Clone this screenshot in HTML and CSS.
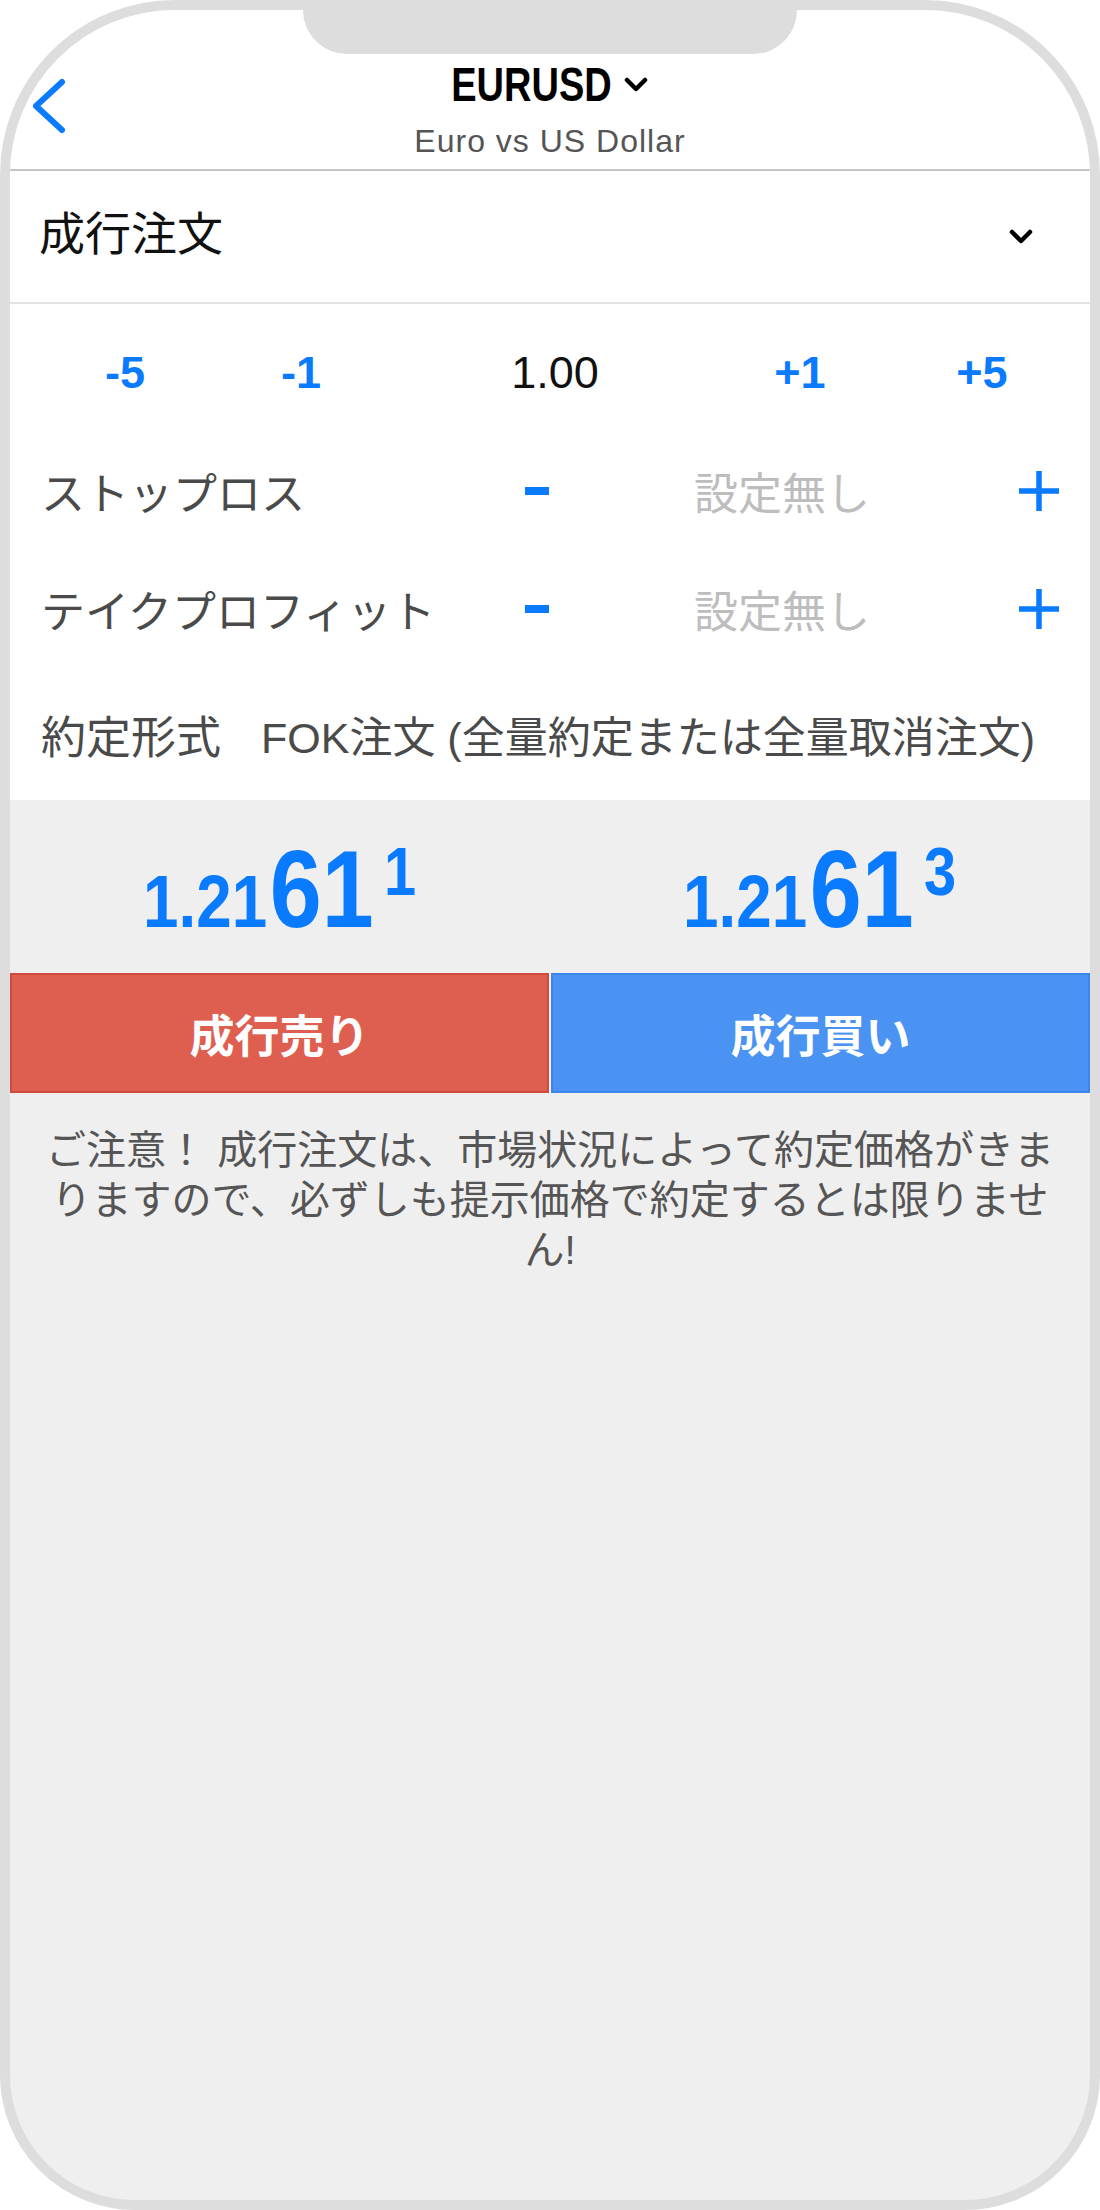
FILE: index.html
```html
<!DOCTYPE html>
<html lang="ja">
<head>
    <meta charset="UTF-8">
    <meta name="viewport" content="width=device-width, initial-scale=1.0">
    <title>EURUSD 成行注文</title>
    <link rel="stylesheet" href="styles.css">
</head>
<body>
    <div class="phone">
        <div class="notch"></div>

        <header class="nav">
            <a href="#" class="back">
                <svg width="36" height="56" viewBox="0 0 36 56"><polyline points="30,4 4,28 30,52" fill="none" stroke="#0a7aff" stroke-width="6" stroke-linecap="round" stroke-linejoin="round"/></svg>
            </a>
            <div class="nav-title">
                <div class="symbol">
                    <span class="symbol-name">EURUSD</span>
                    <svg class="caret caret-title" width="26" height="16" viewBox="0 0 26 16"><polyline points="4,3 13,12 22,3" fill="none" stroke="#000" stroke-width="4.5" stroke-linecap="round" stroke-linejoin="round"/></svg>
                </div>
                <div class="symbol-desc">Euro vs US Dollar</div>
            </div>
            <div></div>
        </header>

        <div class="order-type">
            <span class="order-type-name">成行注文</span>
            <svg class="caret" width="26" height="16" viewBox="0 0 26 16"><polyline points="4,3 13,12 22,3" fill="none" stroke="#000" stroke-width="4.5" stroke-linecap="round" stroke-linejoin="round"/></svg>
        </div>

        <section class="order-form">
            <div class="lot-row">
                <span class="step">-5</span>
                <span class="step">-1</span>
                <span class="lot-value">1.00</span>
                <span class="step">+1</span>
                <span class="step step-last">+5</span>
            </div>

            <div class="level-row">
                <span class="level-label">ストップロス</span>
                <svg width="24" height="8" viewBox="0 0 24 8"><rect width="24" height="8" fill="#0a7aff"/></svg>
                <span class="level-value">設定無し</span>
                <svg width="42" height="42" viewBox="0 0 42 42"><path d="M21 1v40M1 21h40" stroke="#0a7aff" stroke-width="5.5"/></svg>
            </div>

            <div class="level-row">
                <span class="level-label">テイクプロフィット</span>
                <svg width="24" height="8" viewBox="0 0 24 8"><rect width="24" height="8" fill="#0a7aff"/></svg>
                <span class="level-value">設定無し</span>
                <svg width="42" height="42" viewBox="0 0 42 42"><path d="M21 1v40M1 21h40" stroke="#0a7aff" stroke-width="5.5"/></svg>
            </div>

            <div class="fill-row">
                <span class="fill-label">約定形式</span>
                <span class="fill-value">FOK注文 (全量約定または全量取消注文)</span>
            </div>
        </section>

        <section class="quotes">
            <div class="quote">
                <span class="quote-num"><span class="q-small">1.21</span><span class="q-big">61</span><span class="q-pip">1</span></span>
            </div>
            <div class="quote">
                <span class="quote-num"><span class="q-small">1.21</span><span class="q-big">61</span><span class="q-pip">3</span></span>
            </div>
        </section>

        <div class="trade-btns">
            <button type="button" class="btn btn-sell">成行売り</button>
            <button type="button" class="btn btn-buy">成行買い</button>
        </div>

        <p class="notice">ご注意！ 成行注文は、市場状況によって約定価格がきま<br>りますので、必ずしも提示価格で約定するとは限りませ<br>ん!</p>
    </div>
</body>
</html>
```

FILE: styles.css
```css
* {
    box-sizing: border-box;
}
body {
    margin: 0;
    background: #fff;
    font-family: "Liberation Sans", "Noto Sans CJK JP", sans-serif;
}
.phone {
    position: relative;
    width: 1100px;
    height: 2210px;
    border: 10px solid #ddd;
    border-radius: 175px 175px 135px 135px;
    overflow: hidden;
    background: #efefef;
}
.notch {
    position: absolute;
    top: 0;
    left: 293px;
    width: 494px;
    height: 44px;
    background: #ddd;
    border-radius: 0 0 45px 45px;
}

/* nav bar */
.nav {
    display: grid;
    grid-template-columns: 110px 1fr 110px;
    height: 161px;
    background: #fff;
    border-bottom: 2px solid #c4c4c4;
}
.back {
    padding: 68px 0 0 22px;
}
.nav-title {
    padding-top: 50px;
    text-align: center;
}
.symbol {
    display: flex;
    justify-content: center;
    align-items: center;
    height: 49px;
}
.symbol-name {
    display: inline-block;
    font-size: 49px;
    line-height: 49px;
    font-weight: bold;
    color: #000;
    transform: scaleX(0.775);
    margin: 0 -23px;
}
.caret-title {
    margin-left: 12px;
}
.symbol-desc {
    margin-top: 16px;
    font-size: 32px;
    line-height: 32px;
    letter-spacing: 1px;
    color: #555;
}

/* order type */
.order-type {
    display: flex;
    align-items: center;
    justify-content: space-between;
    height: 133px;
    padding: 0 56px 0 29px;
    background: #fff;
    border-bottom: 2px solid #e2e2e2;
    font-size: 46px;
    color: #111;
}
.order-type-name {
    margin-bottom: 14px;
}

/* form */
.order-form {
    background: #fff;
    padding-top: 10px;
}
.lot-row {
    display: grid;
    grid-template-columns: 230px 122px 386px 104px 1fr;
    align-items: center;
    height: 118px;
    padding-right: 48px;
    font-size: 45px;
    text-align: center;
}
.step {
    color: #0a7aff;
    font-weight: bold;
}
.step-last {
    justify-self: end;
    width: 120px;
}
.lot-value {
    color: #111;
    font-size: 45px;
}
.level-row {
    display: grid;
    grid-template-columns: 456px 80px 410px 1fr;
    align-items: center;
    justify-items: center;
    height: 118px;
    padding-left: 31px;
    font-size: 44px;
}
.level-label {
    justify-self: start;
    color: #4a4a4a;
}
.level-value {
    color: #bdbdbd;
}
.fill-row {
    display: flex;
    align-items: center;
    height: 132px;
    padding-left: 31px;
    font-size: 43px;
    color: #4a4a4a;
    white-space: nowrap;
}
.fill-label {
    font-size: 45px;
}
.fill-value {
    margin-left: 40px;
}

/* quotes */
.quotes {
    display: grid;
    grid-template-columns: 1fr 1fr;
    height: 173px;
    padding-top: 34px;
}
.quote {
    text-align: center;
    font-size: 110px;
    line-height: 110px;
    font-weight: bold;
    color: #0a7aff;
}
.quote-num {
    display: inline-block;
    transform: scaleX(0.85);
}
.q-small {
    font-size: 75px;
    line-height: 1;
}
.q-big {
    margin-left: 3px;
}
.q-pip {
    font-size: 68px;
    line-height: 1;
    vertical-align: 32px;
    margin-left: 12px;
}

/* buttons */
.trade-btns {
    display: grid;
    grid-template-columns: 1fr 1fr;
    gap: 2px;
    height: 120px;
}
.btn {
    border: 0;
    padding: 0;
    font-family: "Liberation Sans", "Noto Sans CJK JP", sans-serif;
    font-size: 45px;
    font-weight: bold;
    color: #fff;
}
.btn-sell {
    background: #de5e50;
    box-shadow: inset 0 0 0 2px #d04a3d;
}
.btn-buy {
    background: #4a93f2;
    box-shadow: inset 0 0 0 2px #3a86ec;
}

.notice {
    margin: 0;
    padding: 32px 10px 0;
    text-align: center;
    font-size: 40px;
    line-height: 50px;
    color: #555;
}
```
